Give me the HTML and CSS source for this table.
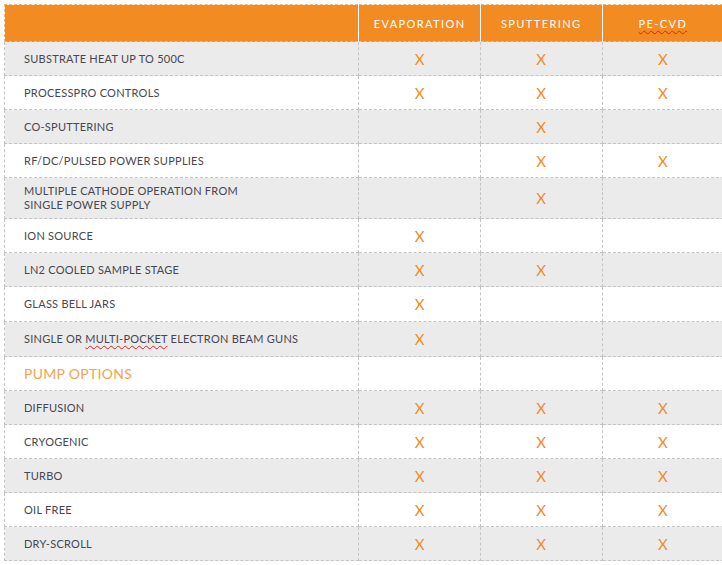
FILE: index.html
```html
<!DOCTYPE html>
<html>
<head>
<meta charset="utf-8">
<link rel="stylesheet" href="styles.css">
</head>
<body>
<table class="spec">
  <colgroup>
    <col class="c-label"><col class="c-opt"><col class="c-mid"><col class="c-opt">
  </colgroup>
  <thead>
    <tr>
      <th></th>
      <th>EVAPORATION</th>
      <th>SPUTTERING</th>
      <th><span class="spell">PE-CVD</span></th>
    </tr>
  </thead>
  <tbody>
    <tr class="g"><td>SUBSTRATE HEAT UP TO 500C</td><td class="x">X</td><td class="x">X</td><td class="x">X</td></tr>
    <tr><td>PROCESSPRO CONTROLS</td><td class="x">X</td><td class="x">X</td><td class="x">X</td></tr>
    <tr class="g"><td>CO-SPUTTERING</td><td></td><td class="x">X</td><td></td></tr>
    <tr><td>RF/DC/PULSED POWER SUPPLIES</td><td></td><td class="x">X</td><td class="x">X</td></tr>
    <tr class="g tall"><td>MULTIPLE CATHODE OPERATION FROM<br>SINGLE POWER SUPPLY</td><td></td><td class="x">X</td><td></td></tr>
    <tr><td>ION SOURCE</td><td class="x">X</td><td></td><td></td></tr>
    <tr class="g"><td>LN2 COOLED SAMPLE STAGE</td><td class="x">X</td><td class="x">X</td><td></td></tr>
    <tr class="plus"><td>GLASS BELL JARS</td><td class="x">X</td><td></td><td></td></tr>
    <tr class="g plus"><td>SINGLE OR <span class="spell">MULTI-POCKET</span> ELECTRON BEAM GUNS</td><td class="x">X</td><td></td><td></td></tr>
    <tr><td class="section">PUMP OPTIONS</td><td></td><td></td><td></td></tr>
    <tr class="g"><td>DIFFUSION</td><td class="x">X</td><td class="x">X</td><td class="x">X</td></tr>
    <tr><td>CRYOGENIC</td><td class="x">X</td><td class="x">X</td><td class="x">X</td></tr>
    <tr class="g"><td>TURBO</td><td class="x">X</td><td class="x">X</td><td class="x">X</td></tr>
    <tr><td>OIL FREE</td><td class="x">X</td><td class="x">X</td><td class="x">X</td></tr>
    <tr class="g"><td>DRY-SCROLL</td><td class="x">X</td><td class="x">X</td><td class="x">X</td></tr>
  </tbody>
</table>
</body>
</html>
```
FILE: styles.css
```css
html, body {
  margin: 0;
  background: #ffffff;
}
body {
  padding: 4px 0 0 4px;
  overflow: hidden;
  font-family: "Lato", "Open Sans", "DejaVu Sans", sans-serif;
}
.spec {
  border-collapse: collapse;
  table-layout: fixed;
  width: 720px;
}
.c-label { width: 354px; }
.c-opt { width: 121px; }
.c-mid { width: 122px; }
.spec th {
  background: #f28b22;
  color: #ffffff;
  font-weight: normal;
  font-size: 11px;
  letter-spacing: 1.4px;
  height: 36px;
  padding: 0;
  text-align: center;
  border: 1px dashed #f7b777;
  border-right: 1px solid #ffffff;
}
.spec td {
  height: 33px;
  padding: 0 0 0 19px;
  border: 1px dashed #c4c4c4;
  font-size: 11px;
  line-height: 14px;
  color: #474752;
  letter-spacing: 0.25px;
  vertical-align: middle;
}
.spec tr.g td { background: #ebebeb; }
.spec tr.tall td { height: 40px; }
.spec tr.plus td { height: 34px; }
.spec td.x {
  padding: 0;
  text-align: center;
  color: #f28b22;
  font-size: 15px;
  letter-spacing: 0;
}
.spec td.section {
  color: #f5a24f;
  font-size: 14px;
  letter-spacing: 0.3px;
}
.spell {
  text-decoration: underline wavy #e02020;
  text-decoration-thickness: 1px;
  text-underline-offset: 2px;
}
```
